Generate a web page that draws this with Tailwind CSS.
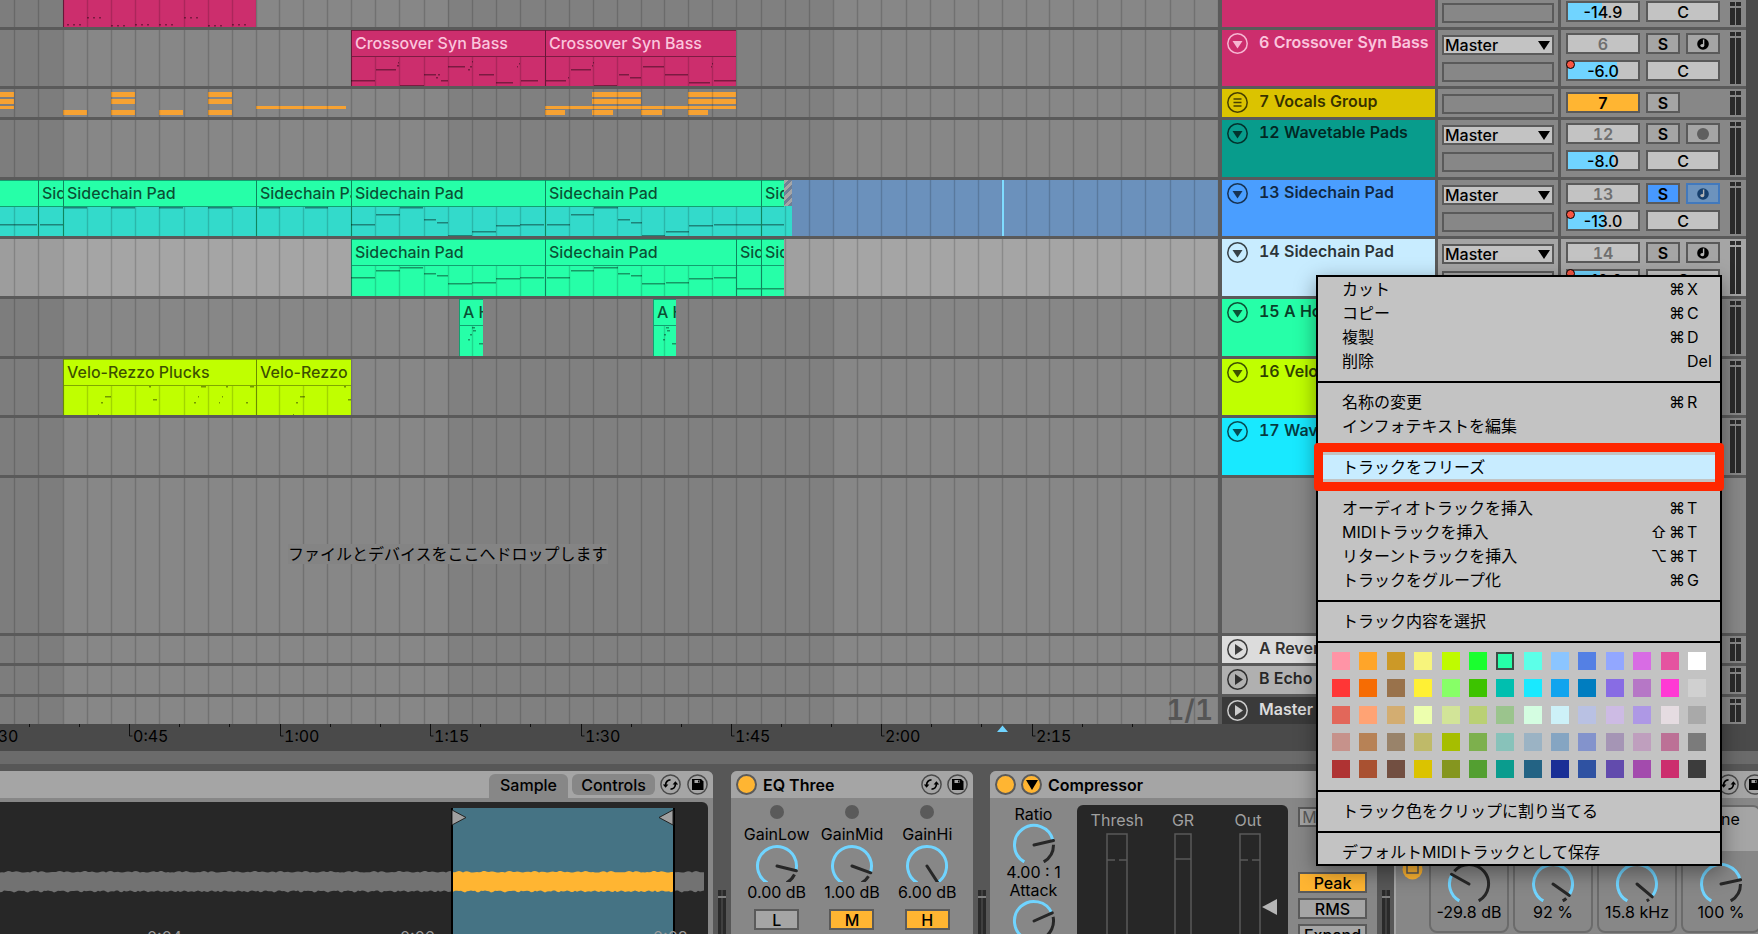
<!DOCTYPE html>
<html lang="ja">
<head>
    <meta charset="UTF-8">
    <meta name="viewport" content="width=device-width, initial-scale=1.0">
    <title>Arrangement</title>
    <script src="https://cdn.jsdelivr.net/npm/@tailwindcss/browser@4"></script>
</head>
<body class="h-screen min-h-[800px] flex flex-col overflow-hidden bg-[#575757] font-[Inter,'Noto_Sans_CJK_JP',sans-serif] text-base leading-5 text-black">

    <!-- shared icons -->
    <svg class="hidden">
        <symbol id="i-fold" viewBox="0 0 21 21">
            <circle cx="10.5" cy="10.5" r="9.7" fill="none" stroke="currentColor" stroke-width="1.5"/>
            <path d="M5.5 8h10l-5 7.5z" fill="currentColor"/>
        </symbol>
        <symbol id="i-play" viewBox="0 0 21 21">
            <circle cx="10.5" cy="10.5" r="9.7" fill="none" stroke="currentColor" stroke-width="1.5"/>
            <path d="M8 5v11l8-5.500z" fill="currentColor"/>
        </symbol>
        <symbol id="i-group" viewBox="0 0 21 21">
            <circle cx="10.5" cy="10.5" r="9.7" fill="none" stroke="currentColor" stroke-width="1.5"/>
            <path d="M6.500 7h8M6.500 10.500h8M6.500 14h8" stroke="currentColor" stroke-width="1.5"/>
        </symbol>
        <symbol id="i-swap" viewBox="0 0 21 21">
            <circle cx="10.5" cy="10.5" r="9.6" fill="none" stroke="#4a4a4a" stroke-width="1.5"/>
            <path d="M10.500 5.800C7.500 5.800 5.600 8 5.600 11M10.500 15.200C13.500 15.200 15.400 13 15.400 10" fill="none" stroke="#000" stroke-width="1.8"/>
            <path d="M2.800 10.500h5.600L5.600 13.800zM12.600 10.500h5.600L15.400 7.200z" fill="#000"/>
        </symbol>
        <symbol id="i-save" viewBox="0 0 21 21">
            <circle cx="10.5" cy="10.5" r="9.6" fill="none" stroke="#4a4a4a" stroke-width="1.5"/>
            <path d="M5 5h9l2.500 2.500V16H5z" fill="#000"/>
            <path d="M7.500 6h5v3h-5z" fill="#a5a5a5"/>
            <path d="M11 6.500h1v2h-1z" fill="#000"/>
        </symbol>
        <symbol id="i-note" viewBox="0 0 14 14">
            <circle cx="7" cy="7" r="5.8" fill="currentColor"/>
            <path d="M7.600 2.500v5.500" stroke="#b5b5b5" stroke-width="1.4"/>
            <ellipse cx="6.300" cy="8.600" rx="2" ry="1.600" fill="#b5b5b5"/>
        </symbol>
    </svg>

    <!-- arrangement -->
    <main class="flex-1 flex min-h-0">
        <div id="tracks" class="flex-1 flex flex-col min-w-0"></div>
        <div class="w-3 bg-[#4a4a4a]"></div>
    </main>

    <!-- time ruler -->
    <svg id="ruler" class="block h-[27px] w-full shrink-0 bg-[#4a4a4a] tabular-nums"></svg>
    <div class="h-[13px] shrink-0 bg-[#6b6b6b]"></div>
    <div class="h-[7px] shrink-0"></div>

    <!-- device chain -->
    <footer class="h-[163px] shrink-0 flex overflow-hidden">
        <section class="w-[713px] shrink-0 bg-[#878787] rounded-tr-md overflow-hidden">
            <div class="h-[27px] bg-[#a5a5a5] flex items-end justify-end pr-[5px]">
                <button class="h-6 w-[79px] bg-[#878787] rounded-t-md text-center font-medium pb-[2px]">Sample</button>
                <button class="h-[21px] w-[83px] bg-[#878787] rounded-md text-center font-medium ml-1 mb-[3px]">Controls</button>
                <button aria-label="Hot-Swap" class="ml-[5px] mb-[3px]"><svg class="size-[21px]"><use href="#i-swap"/></svg></button>
                <button aria-label="Save" class="ml-[6px] mb-[3px]"><svg class="size-[21px]"><use href="#i-save"/></svg></button>
            </div>
            <div class="pt-1 pr-[5px]">
                <svg id="wave" class="block w-full h-[132px] bg-[#272727] rounded-tr-md"></svg>
            </div>
        </section>

        <div class="w-[18px] shrink-0 pt-[119px] flex justify-center">
            <svg class="w-2 h-11"><path d="M0 0h3.500v6H0zM4.500 0H8v6H4.500zM0 8h3.500v36H0zM4.500 8H8v36H4.500z" fill="#2a2a2a"/><path d="M0 7h8" stroke="#a5a5a5"/></svg>
        </div>

        <section class="w-[242px] shrink-0 bg-[#878787] rounded-t-md overflow-hidden">
            <div class="h-[27px] bg-[#a5a5a5] flex items-center px-[5px]">
                <button aria-label="EQ Three on" class="size-[21px] rounded-full bg-[#ffb532] border-2 border-[#5a5a5a]"></button>
                <h2 class="ml-[6px] font-semibold">EQ Three</h2>
                <button aria-label="Hot-Swap" class="ml-auto"><svg class="size-[21px]"><use href="#i-swap"/></svg></button>
                <button aria-label="Save" class="ml-[5px]"><svg class="size-[21px]"><use href="#i-save"/></svg></button>
            </div>
            <div id="eq" class="grid grid-cols-3 px-2 pt-[7px]"></div>
        </section>

        <div class="w-[17px] shrink-0 pt-[119px] flex justify-center">
            <svg class="w-2 h-11"><path d="M0 0h3.500v6H0zM4.500 0H8v6H4.500zM0 8h3.500v36H0zM4.500 8H8v36H4.500z" fill="#2a2a2a"/><path d="M0 7h8" stroke="#a5a5a5"/></svg>
        </div>

        <section class="w-[387px] shrink-0 bg-[#878787] rounded-t-md overflow-hidden">
            <div class="h-[27px] bg-[#a5a5a5] flex items-center px-[5px]">
                <button aria-label="Compressor on" class="size-[21px] rounded-full bg-[#ffb532] border-2 border-[#5a5a5a]"></button>
                <button aria-label="Fold" class="size-[21px] rounded-full bg-[#ffb532] border-2 border-[#5a5a5a] ml-[5px] flex items-center justify-center">
                    <svg class="w-3 h-[10px]"><path d="M0 0h12L6 10z"/></svg>
                </button>
                <h2 class="ml-[6px] font-semibold">Compressor</h2>
            </div>
            <div class="flex pt-[7px] h-[136px]">
                <div class="w-[87px] flex flex-col items-center leading-[18px]">
                    <span>Ratio</span>
                    <svg class="w-11 h-10 shrink-0" data-knob="-13"></svg>
                    <span>4.00 : 1</span>
                    <span>Attack</span>
                    <svg class="w-11 h-10 shrink-0" data-knob="-24"></svg>
                </div>
                <div class="w-[211px] bg-[#272727] rounded-t-md pt-[2px] text-[#a0a0a0]">
                    <div class="flex pl-[9px] leading-[26px] text-center">
                        <span class="w-[62px]">Thresh</span>
                        <span class="w-[70px]">GR</span>
                        <span class="w-[60px]">Out</span>
                    </div>
                    <svg class="block w-full h-[101px]" fill="none" stroke="#5a5a5a" stroke-width="1.5">
                        <path d="M30 110V1h20v109M30 27h8M42 27h8M98 110V1h16v109M98 26h16M163 110V1h20v109M163 27h8M175 27h8"/>
                        <path d="M185 74l15-8v16z" fill="#b5b5b5" stroke="none"/>
                    </svg>
                </div>
                <div class="w-[69px] ml-[10px] pt-[2px] flex flex-col gap-[5px]">
                    <button class="h-5 shrink-0 border-2 border-[#5a5a5a] bg-[#a5a5a5] text-[#5a5a5a] leading-4 mb-10">Makeup</button>
                    <button class="h-[21px] shrink-0 border-2 border-[#5a5a5a] bg-[#ffb532] leading-4 font-medium">Peak</button>
                    <button class="h-[21px] shrink-0 border-2 border-[#5a5a5a] bg-[#a5a5a5] leading-4 font-medium">RMS</button>
                    <button class="h-[21px] shrink-0 border-2 border-[#5a5a5a] bg-[#a5a5a5] leading-4 font-medium">Expand</button>
                </div>
            </div>
        </section>

        <div class="w-[17px] shrink-0 pt-[119px] flex justify-center">
            <svg class="w-2 h-11"><path d="M0 0h3.500v6H0zM4.500 0H8v6H4.500zM0 8h3.500v36H0zM4.500 8H8v36H4.500z" fill="#2a2a2a"/><path d="M0 7h8" stroke="#a5a5a5"/></svg>
        </div>

        <section class="flex-1 min-w-[366px] bg-[#878787] border-l-2 border-[#a5a5a5] rounded-tl-md overflow-hidden">
            <div class="h-[27px] bg-[#a5a5a5] flex items-center pl-[322px]">
                <button aria-label="Hot-Swap" class="shrink-0"><svg class="size-[21px]"><use href="#i-swap"/></svg></button>
                <button aria-label="Save" class="shrink-0 ml-[5px]"><svg class="size-[21px]"><use href="#i-save"/></svg></button>
            </div>
            <div class="flex pt-[7px]">
                <div class="w-[33px] shrink-0 flex justify-center pt-[54px]">
                    <svg class="size-[21px]"><circle cx="10.500" cy="10.500" r="10" fill="#ffb532"/><path d="M5 6h11v8H5z" fill="none" stroke="#5a5a5a" stroke-width="1.500"/></svg>
                </div>
                <div id="reverb" class="flex gap-1"></div>
            </div>
        </section>
    </footer>

    <!-- context menu -->
    <div class="absolute left-[1316px] top-[275px] w-[406px] z-30 bg-[#c3c3c3] border-2 border-black shadow-[0_6px_20px_rgba(0,0,0,0.4)]">
        <ul id="menu-top"></ul>
        <div class="h-[2px] bg-black mt-2 mb-[7px]"></div>
        <div id="palette" class="grid grid-cols-[repeat(14,18px)] justify-between gap-y-[9px] px-[14px] pt-[2px] pb-1"></div>
        <ul id="menu-bottom"></ul>
    </div>

    <script>
        // x of the bar lines in the lanes
        const bars = [14, 38, 63, 87, 111, 135, 159, 184, 208, 232, 256, 279, 303, 327, 351, 375, 399, 424, 448, 472, 496, 520, 545, 569, 593, 617, 641, 664, 688, 712, 736, 761, 785, 809, 833, 857, 881, 906, 930, 954, 978, 1002, 1026, 1049, 1073, 1097, 1121, 1145, 1170, 1194];
        for (let x = 1218; x < 3000; x += 24) bars.push(x);
        const barPath = bars.map(x => `M${x + 0.5} 0v400`).join('');

        // notes are [x, y, width] inside the lane
        const padA = [[351,44,24],[376,34,24],[400,27,23],[424,39,12],[437,42,11],[448,55,24],[472,51,24],[496,45,24],[520,44,24],
                      [547,44,23],[571,34,23],[594,27,24],[618,39,12],[631,42,11],[642,55,23],[666,51,23],[689,45,24],[714,44,47],[762,44,22]];
        const padB = [[351,38,24],[376,31,24],[400,28,23],[424,34,12],[437,36,11],[448,44,24],[472,43,24],[496,39,24],[520,38,24],
                      [547,38,23],[571,31,23],[594,28,24],[618,34,12],[631,36,11],[642,44,23],[666,43,23],[689,39,24],[714,38,22],[737,49,24],[762,49,22]];
        const bass = [[351,50,24],[376,39,20],[397,35,2],[398,32,1],[400,55,24],[424,44,12],[436,47,2],[438,44,2],[441,50,7],[448,36,17],[468,39,2],[470,36,2],[472,31,1],[479,44,15],[496,52,17],[517,36,1],[519,33,1],[521,50,17],
                      [546,50,20],[568,47,1],[571,39,20],[592,35,1],[593,32,1],[594,55,23],[619,44,10],[630,47,11],[643,36,21],[665,44,23],[689,52,21],[711,36,1],[712,33,1],[714,50,22]];
        const low = [];
        [[67,24],[87,17],[111,25],[135,24],[159,24],[184,17],[208,25],[232,24]].forEach(([x, y]) => {
            for (let i = 0; i < 3; i++) low.push([x + i * 6, y, 2]);
        });

        const tracks = [
            { h: 'h-[30px]', color: 'bg-[#cc2e6d]', io: 0, mix: 'tail', vol: '-14.9', fill: 48, clips: [['', 63, 193]], clip: 'bg-[#cc2e6d] border-[#7d1c43]', head: 'hidden', notes: low },
            { h: 'h-[59px]', name: '6 Crossover Syn Bass', color: 'bg-[#cc2e6d] text-[#fbc5dd]', io: 1, mix: 'full', num: 6, vol: '-6.0', fill: 70, dot: 1, arm: 'note',
              clips: [['Crossover Syn Bass', 351, 194], ['Crossover Syn Bass', 545, 191]], clip: 'bg-[#cc2e6d] border-[#7d1c43]', head: 'bg-[#cc2e6d] border-[#7d1c43] text-[#fbc5dd]', notes: bass },
            { h: 'h-[31px]', name: '7 Vocals Group', color: 'bg-[#dbc300] text-black/75', icon: '#i-group', io: 0, mix: 'group', num: 7,
              blocks: [[0,3,14,5],[0,10,14,5],[0,17,14,3],[63,21,24,5],[111,3,24,5],[111,10,24,5],[111,21,24,5],[159,21,24,5],[208,3,24,5],[208,10,24,5],[208,21,24,5],[256,17,90,3],
                       [545,17,191,3],[545,21,20,5],[592,3,49,5],[592,10,49,5],[592,21,21,5],[641,21,21,5],[688,3,48,5],[688,10,48,5],[688,21,20,5]] },
            { h: 'h-[60px]', name: '12 Wavetable Pads', color: 'bg-[#089c8c] text-black/75', io: 1, mix: 'full', num: 12, vol: '-8.0', fill: 66, arm: 'dot' },
            { h: 'h-[59px]', name: '13 Sidechain Pad', color: 'bg-[#4a9eff] text-black/75', io: 1, mix: 'full', num: 13, vol: '-13.0', fill: 52, dot: 1, arm: 'note', solo: 1, selection: 1,
              clips: [['', -20, 58], ['Sidechain Pad', 38, 25], ['Sidechain Pad', 63, 193], ['Sidechain Pad', 256, 95], ['Sidechain Pad', 351, 194], ['Sidechain Pad', 545, 216], ['Sidechain Pad', 761, 23]],
              clip: 'bg-[#33dacb] border-[#12a070]', head: 'bg-[#26ffa8] border-[#12a070] text-black/70',
              notes: [[0,44,37],[40,44,23],[64,27,23],[111,27,24],[159,27,24],[208,27,24],[259,27,21],[305,27,23]].concat(padA) },
            { h: 'h-[60px]', name: '14 Sidechain Pad', color: 'bg-[#c8ecff] text-black/80', lane: 'bg-white/25', io: 1, mix: 'full', num: 14, vol: '-10.0', fill: 46, dot: 1, arm: 'note',
              clips: [['Sidechain Pad', 351, 194], ['Sidechain Pad', 545, 191], ['Sidechain Pad', 736, 25], ['Sidechain Pad', 761, 23]], clip: 'bg-[#26ffa8] border-[#12a070]', head: 'bg-[#26ffa8] border-[#12a070] text-black/70', notes: padB },
            { h: 'h-[60px]', name: '15 A Ho', color: 'bg-[#26ffa8] text-black/75', clips: [['A Ho', 459, 24], ['A Ho', 653, 23]], clip: 'bg-[#26ffa8] border-[#12a070]', head: 'bg-[#26ffa8] border-[#12a070] text-black/70',
              notes: [[472,28,3],[473,31,3],[470,35,2],[468,40,2],[479,44,4],[666,28,3],[667,31,3],[664,35,2],[663,40,2],[672,44,4]] },
            { h: 'h-[59px]', name: '16 Velo', color: 'bg-[#c0ff00] text-black/75', clips: [['Velo-Rezzo Plucks', 63, 193], ['Velo-Rezzo', 256, 95]], clip: 'bg-[#c0ff00] border-[#7fa800]', head: 'bg-[#c0ff00] border-[#7fa800] text-black/70',
              notes: [[98,55,1],[101,43,2],[105,37,6],[149,27,2],[153,40,4],[194,43,2],[198,37,1],[201,27,5],[219,43,1],[222,37,1],[226,27,2],[246,43,2],[250,27,4],[293,55,1],[296,43,2],[300,37,5],[344,27,2],[348,40,3]] },
            { h: 'h-[60px]', name: '17 Wav', color: 'bg-[#18e9ff] text-black/75' },
            { h: 'flex-1', drop: 1, color: 'bg-[#878787]' },
            { h: 'h-[30px]', name: 'A Rever', color: 'bg-[#dcdcdc] text-black/80', icon: '#i-play' },
            { h: 'h-[31px]', name: 'B Echo', color: 'bg-[#b0b0b0] text-black/80', icon: '#i-play' },
            { h: 'h-[27px]', name: 'Master', color: 'bg-[#3a3a3a] text-[#dcdcdc]', icon: '#i-play', last: 1 }
        ];

        const field = 'h-[21px] border-2 border-[#5a5a5a] text-center leading-4';

        function lane(t) {
            const clips = (t.clips || []).map(([name, x, w]) => `
                <div class="absolute inset-y-0 border-l ${t.clip}" style="left:${x}px;width:${w}px">
                    <div class="relative z-10 h-[27px] border-y pl-[3px] leading-6 font-medium overflow-hidden whitespace-nowrap ${t.head}">${name}</div>
                </div>`).join('');
            const notes = (t.notes || []).map(([x, y, w]) => `<rect x="${x}" y="${y}" width="${w}" height="1.5" fill="#000" fill-opacity=".4"/>`).join('');
            const blocks = (t.blocks || []).map(([x, y, w, h]) => `<rect x="${x}" y="${y}" width="${w}" height="${h}" fill="#f7a232"/>`).join('');
            return `
            <div class="relative isolate flex-1 min-w-0 overflow-hidden bg-[#878787]">
                <div class="absolute inset-y-0 left-0 w-[63px] bg-black/7"></div>
                <div class="absolute inset-y-0 left-[448px] w-[385px] bg-black/5"></div>
                <div class="absolute inset-0 ${t.lane || ''}"></div>
                ${t.selection ? `
                <div class="absolute inset-y-0 left-[784px] right-0 bg-[#5898e0]/60"></div>
                <div class="absolute inset-y-0 left-[784px] w-2 bg-[#33dacb]"></div>
                <div class="absolute top-0 left-[784px] w-2 h-[26px] z-10 bg-[repeating-linear-gradient(135deg,#a5a5a5_0_3px,#6f7f95_3px_6px)]"></div>
                <div class="absolute inset-y-0 left-[1002px] w-[2px] z-10 bg-[#7fdcff]"></div>` : ''}
                ${clips}
                <svg class="absolute inset-0 w-full h-full">${blocks}<path d="${barPath}" stroke="#000" stroke-opacity=".16" stroke-width="1.4"/>${notes}</svg>
                ${t.drop ? '<div class="relative z-10 h-full flex items-center pl-[288px] pb-1"><p class="bg-[#848484] leading-5">ファイルとデバイスをここへドロップします</p></div>' : ''}
                ${t.last ? '<div class="relative z-10 text-right pr-[5px] text-[28px] leading-[27px] font-semibold tabular-nums text-[#555]">1/1</div>' : ''}
            </div>`;
        }

        function io(t) {
            if (t.io === undefined) return '';
            return `
                ${t.io ? `
                <div class="relative">
                    <select aria-label="Audio To" class="block w-full h-5 border-2 border-[#5a5a5a] bg-[#c3c3c3] appearance-none pl-px leading-4 font-medium"><option>Master</option></select>
                    <svg class="absolute right-1 top-[6px] w-3 h-[9px] pointer-events-none"><path d="M0 0h12L6 9z"/></svg>
                </div>` : ''}
                <div class="h-5 border-2 border-[#5a5a5a]"></div>`;
        }

        function mixer(t) {
            if (!t.mix) return '';
            const volume = t.vol ? `
                <div class="flex gap-[6px] relative">
                    <input aria-label="Volume" value="${t.vol}" class="${field} w-[74px] font-medium" style="background:linear-gradient(90deg,#70d4ff ${t.fill}%,#c3c3c3 ${t.fill}%)">
                    <input aria-label="Pan" value="C" class="${field} w-[74px] bg-[#c3c3c3] font-medium">
                    ${t.dot ? '<span class="absolute left-0 top-0 size-[9px] rounded-full border border-black bg-[#f75543]"></span>' : ''}
                </div>` : '';
            if (t.mix === 'tail') return volume;
            const armIcon = t.arm === 'note' ? '<svg class="size-[14px]"><use href="#i-note"/></svg>' : '<span class="size-3 rounded-full bg-[#5f5f5f]"></span>';
            return `
                <div class="flex gap-[6px]">
                    <button class="${field} w-[74px] font-semibold tabular-nums ${t.mix === 'group' ? 'bg-[#ffb532]' : 'bg-[#c3c3c3] text-[#6f6f6f]'}">${t.num}</button>
                    <button class="${field} w-[34px] font-semibold ${t.solo ? 'bg-[#4799ff]' : 'bg-[#a5a5a5]'}">S</button>
                    ${t.arm ? `<button aria-label="Arm" class="h-[21px] w-[34px] border-2 flex items-center justify-center ${t.solo ? 'bg-[#6d93bd] border-[#4279bd] text-[#17406e]' : 'bg-[#a5a5a5] border-[#5a5a5a]'}">${armIcon}</button>` : ''}
                </div>${volume}`;
        }

        document.getElementById('tracks').innerHTML = tracks.map(t => {
            const side = t.lane ? 'bg-[#a5a5a5]' : 'bg-[#878787]';
            const pack = t.mix === 'tail' ? 'justify-end' : '';
            return `
            <div class="flex ${t.h} ${t.drop ? 'min-h-0' : 'shrink-0'} ${t.last ? '' : 'border-b-[3px]'} border-[#5a5a5a]">
                ${lane(t)}
                <div class="w-[217px] border-l-4 border-[#5a5a5a] overflow-hidden flex pl-[5px] pt-[3px] gap-[11px] ${t.color}">
                    ${t.name ? `<button aria-label="Fold track" class="self-start opacity-90"><svg class="size-[21px]"><use href="${t.icon || '#i-fold'}"/></svg></button>
                    <span class="font-semibold leading-[18px] whitespace-nowrap tabular-nums">${t.name}</span>` : ''}
                </div>
                <div class="w-[123px] border-l-[3px] border-[#5a5a5a] overflow-hidden flex flex-col gap-[7px] px-1 ${t.mix === 'tail' ? 'pb-1' : 'pt-[5px]'} ${pack} ${side}">${io(t)}</div>
                <div class="w-[188px] border-l-[3px] border-[#5a5a5a] overflow-hidden flex justify-between pl-[5px] pr-[5px] ${side}">
                    <div class="flex flex-col gap-[6px] ${t.mix === 'tail' ? 'pb-[5px]' : 'pt-[3px]'} ${pack}">${mixer(t)}</div>
                    ${t.drop ? '' : `
                    <div class="w-[11px] grid grid-cols-2 grid-rows-[4px_1fr] gap-x-px gap-y-[2px] pt-[2px] pb-[2px]">
                        <i class="bg-[#2a2a2a]"></i><i class="bg-[#2a2a2a]"></i><i class="bg-[#2a2a2a]"></i><i class="bg-[#2a2a2a]"></i>
                    </div>`}
                </div>
            </div>`;
        }).join('');

        // ruler
        let ruler = '';
        ['0:30', '0:45', '1:00', '1:15', '1:30', '1:45', '2:00', '2:15'].forEach((label, i) => {
            const x = Math.round(-21 + i * 150.4);
            ruler += `<path d="M${x + 0.5} 0v12h3M${x + 50.5} 0v3M${x + 100.5} 0v3" fill="none" stroke="#000" stroke-opacity=".8"/><text x="${x + 4}" y="18" fill="#000">${label}</text>`;
        });
        document.getElementById('ruler').innerHTML = ruler + '<path d="M997 8l5.500-6.500L1008 8z" fill="#70d4ff"/>';

        // waveform, y centre at 79
        function band(from, to) {
            let top = '', bottom = '';
            for (let x = from; x <= to; x += 2) {
                const a = 9 + Math.abs(Math.sin(x * 1.7) * Math.cos(x * 0.37)) * 1.6;
                const b = 9 + Math.abs(Math.sin(x * 1.1 + 2) * Math.cos(x * 0.23)) * 2;
                top += `L${x} ${(79.5 - a).toFixed(1)}`;
                bottom = `L${x} ${(79.5 + b).toFixed(1)}` + bottom;
            }
            return 'M' + (top + bottom).slice(1) + 'z';
        }
        document.getElementById('wave').innerHTML = `
            <path d="${band(0, 704)}" fill="#727272"/>
            <rect x="453" y="6" width="220" height="130" fill="#457384"/>
            <path d="${band(453, 673)}" fill="#ffb532"/>
            <path d="M452 6v130M674 6v130" stroke="#000" stroke-width="2"/>
            <path d="M452 8l14 7.500-14 7.500zM673 8l-14 7.500 14 7.500z" fill="#a0a0a0" stroke="#222"/>
            <g fill="#9a9a9a"><text x="147" y="141">0:04</text><text x="400" y="141">0:06</text><text x="653" y="141">0:08</text></g>`;

        // knobs: 300 degree sweep from 120 to 420, needle at the given angle
        function arc(a, b) {
            const p = d => `${(22 + 19.5 * Math.cos(d * Math.PI / 180)).toFixed(1)} ${(22 + 19.5 * Math.sin(d * Math.PI / 180)).toFixed(1)}`;
            return `M${p(a)}A19.5 19.5 0 ${b - a > 180 ? 1 : 0} 1 ${p(b)}`;
        }
        function knob(angle) {
            const end = angle < 120 ? angle + 360 : angle;
            const rad = angle * Math.PI / 180;
            return `<path d="${arc(120, end)}" fill="none" stroke="#70d4ff" stroke-width="3"/>
                ${end + 12 < 420 ? `<path d="${arc(end + 12, 420)}" fill="none" stroke="#272727" stroke-width="3"/>` : ''}
                <path d="M22 22L${(22 + 20 * Math.cos(rad)).toFixed(1)} ${(22 + 20 * Math.sin(rad)).toFixed(1)}" stroke="#272727" stroke-width="3" stroke-linecap="round"/>`;
        }

        document.getElementById('eq').innerHTML = [['GainLow', 14, '0.00 dB', 'L'], ['GainMid', 20, '1.00 dB', 'M'], ['GainHi', 57, '6.00 dB', 'H']].map(([name, a, val, key]) => `
            <div class="flex flex-col items-center whitespace-nowrap">
                <span class="size-[14px] rounded-full bg-[#5a5a5a]"></span>
                <span class="mt-[5px]">${name}</span>
                <svg class="w-11 h-[38px] shrink-0" data-knob="${a}"></svg>
                <span>${val}</span>
                <button class="mt-[7px] h-[21px] w-[45px] border-2 border-[#5a5a5a] leading-4 font-medium ${key === 'L' ? 'bg-[#a5a5a5]' : 'bg-[#ffb532]'}">${key}</button>
            </div>`).join('');

        document.getElementById('reverb').innerHTML = [['', 209, '-29.8 dB'], ['', 35, '92 %'], ['', 40, '15.8 kHz'], ['Tone', -12, '100 %']].map(([name, a, val]) => `
            <div class="w-20 h-32 shrink-0 border-2 border-[#6b6b6b] rounded-lg overflow-hidden flex flex-col items-center whitespace-nowrap">
                <span class="h-11 w-full pt-[2px] bg-[#a5a5a5] text-center">${name}</span>
                <svg class="w-11 h-10 mt-[11px] shrink-0" data-knob="${a}"></svg>
                <span>${val}</span>
            </div>`).join('');

        document.querySelectorAll('[data-knob]').forEach(el => {
            el.innerHTML = knob(Number(el.dataset.knob));
        });

        // menu
        const line = '<li class="h-[2px] bg-black mt-2 mb-[7px]"></li>';
        function item([label, mods, key, active]) {
            return `<li class="relative ${active ? 'bg-[#c8ecff]' : ''}">
                <button class="w-full h-6 flex items-center pl-6 text-left whitespace-nowrap">
                    <span class="flex-1">${label}</span>
                    ${key ? `<span class="flex gap-[2px] pr-[2px]">${[...mods].map(m => `<span>${m}</span>`).join('')}</span><span class="w-[33px]">${key}</span>` : ''}
                </button>
                ${active ? '<div class="absolute -inset-x-1 -inset-y-3 border-[9px] border-[#ff2600] rounded-sm pointer-events-none"></div>' : ''}
            </li>`;
        }
        document.getElementById('menu-top').innerHTML = [
            [['カット', '⌘', 'X'], ['コピー', '⌘', 'C'], ['複製', '⌘', 'D'], ['削除', '', 'Del']],
            [['名称の変更', '⌘', 'R'], ['インフォテキストを編集']],
            [['トラックをフリーズ', '', '', true]],
            [['オーディオトラックを挿入', '⌘', 'T'], ['MIDIトラックを挿入', '⇧⌘', 'T'], ['リターントラックを挿入', '⌥⌘', 'T'], ['トラックをグループ化', '⌘', 'G']],
            [['トラック内容を選択']]
        ].map(group => group.map(item).join('')).join(line);
        document.getElementById('menu-bottom').innerHTML = line + item(['トラック色をクリップに割り当てる']) + line + item(['デフォルトMIDIトラックとして保存']);

        const colors = [
            'ff94a6 ffa529 cc9927 f7f47c bffb00 1aff2f 25ffa8 5cffe8 8bc5ff 5480e4 92a7ff d86ce4 e553a0 ffffff',
            'ff3636 f66c03 99724b fff034 87ff67 3dc300 00bfaf 19e9ff 10a4ee 007dc0 886ce4 b677c6 ff39d4 d0d0d0',
            'e2675a ffa374 d3ad71 edffae d2e498 bad074 9bc48d d4fde1 cdf1f8 b9c1e3 cdbbe4 ae98e5 e5dce1 a9a9a9',
            'c6928b b78256 99836a bfba69 a6be00 7db04d 88c2ba 9bb3c4 85a5c2 8393cc a595b5 bf9fbe bc7196 7b7b7b',
            'af3333 a95131 724f41 dbc300 85961f 539f31 0a9c8e 236384 1a2f96 2f52a2 624bad a34bad cc2e6e 3c3c3c'
        ].join(' ').split(' ');
        document.getElementById('palette').innerHTML = colors.map((c, i) =>
            `<button aria-label="#${c}" class="size-[18px] ${i === 6 ? 'border-2 border-[#3c4c45]' : ''}" style="background:#${c}"></button>`).join('');
    </script>
</body>
</html>
